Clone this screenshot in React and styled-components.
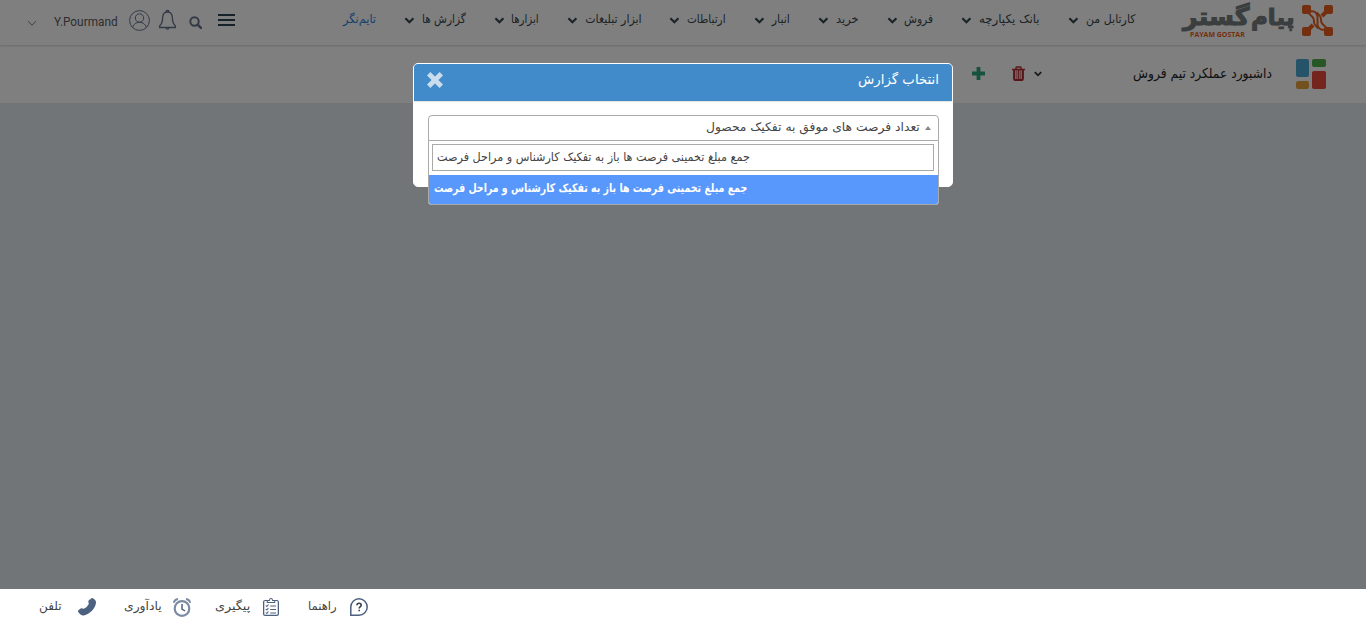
import React, { useLayoutEffect, useRef, useState } from "react";
import styled, { createGlobalStyle } from "styled-components";

const GlobalStyle = createGlobalStyle`
  * { box-sizing: border-box; }
  body {
    margin: 0;
    overflow: hidden;
    font-family: "DejaVu Sans", sans-serif;
    font-size: 12px;
    color: #333;
  }
  svg { display: block; flex: none; }
`;

const FitBox = styled.span`
  display: block;
  flex: none;
  width: ${(p) => p.$width}px;
  height: 20px;
  line-height: 20px;
  direction: ltr;
  white-space: nowrap;
`;

const FitInner = styled.bdi`
  display: inline-block;
  direction: ${(p) => (p.$ltr ? "ltr" : "rtl")};
  transform-origin: 0 50%;
`;

/* Keeps a label at a fixed width whatever Persian face is available. */
function FitText({ width, children, ltr, stretch = 1, ...rest }) {
  const ref = useRef(null);
  const [scale, setScale] = useState(1);
  useLayoutEffect(() => {
    setScale(width / ref.current.offsetWidth);
  }, [width, children]);
  return (
    <FitBox $width={width} {...rest}>
      <FitInner ref={ref} $ltr={ltr} style={{ transform: `scale(${scale}, ${stretch})` }}>
        {children}
      </FitInner>
    </FitBox>
  );
}

const Page = styled.div`
  display: flex;
  flex-direction: column;
  height: 625px;
  direction: rtl;
  background: #e4ebf0;
`;

const Header = styled.header`
  display: flex;
  flex: none;
  height: 45px;
  padding: 0 33px 0 27px;
  background: #fff;
  box-shadow: 0 1px 2px rgba(0, 0, 0, 0.18);
  z-index: 1;
`;

const Logo = styled.div`
  display: flex;
  gap: 7px;
  height: 37px;
  padding-top: 5px;
`;

const LogoWords = styled.div`
  display: flex;
  flex-direction: column;
  width: 112px;
`;

const LogoRow = styled.div`
  display: flex;
  gap: 2px;
  height: 25px;
  color: #747c7e;
`;

const LogoText = styled(FitText)`
  height: 25px;
  line-height: 25px;
  font-size: 23px;
  font-weight: 700;
  -webkit-text-stroke: 1px #747c7e;
`;

const LogoLatin = styled(FitText)`
  height: 8px;
  margin-right: 50px;
  line-height: 8px;
  font-family: "Open Sans", sans-serif;
  font-size: 7.5px;
  font-weight: 700;
  color: #e65f20;
`;

const Nav = styled.nav`
  display: flex;
  align-items: center;
  gap: 28px;
  height: 39px;
  margin-right: 48px;
`;

const NavItem = styled.div`
  display: flex;
  align-items: center;
  gap: 7px;
  color: ${(p) => (p.$active ? "#2f7fd8" : "#37474f")};
  svg { margin-top: 2px; }
`;

const NavLabel = styled(FitText)`
  font-size: 11px;
`;

const Tools = styled.div`
  display: flex;
  align-items: center;
  height: 40px;
  margin-right: auto;
  color: #66738a;
`;

const ToolSlot = styled.div`
  margin-right: ${(p) => p.$gap}px;
  padding-top: ${(p) => p.$drop || 0}px;
`;

const UserName = styled(FitText)`
  height: 23px;
  margin-right: 11px;
  padding-top: 3px;
  font-family: Roboto, sans-serif;
  font-size: 12px;
  color: #5b5b5b;
`;

const TitleBar = styled.div`
  display: flex;
  align-items: center;
  flex: none;
  height: 58px;
  padding: 0 40px 1px 0;
  background: #fff;
`;

const Tile = styled.span`
  height: ${(p) => p.$h}px;
  border-radius: 2px;
  background: ${(p) => p.$color};
`;

const Tiles = styled.div`
  display: flex;
  gap: 3px;
  margin-top: 1px;
`;

const TileColumn = styled.div`
  display: flex;
  flex-direction: column;
  gap: 4px;
  width: ${(p) => p.$w}px;
`;

const PageTitle = styled(FitText)`
  margin-right: 24px;
  font-size: 13px;
  color: #222;
`;

const TitleActions = styled.div`
  display: flex;
  align-items: center;
  margin-right: 91px;
  color: #333;
`;

const Backdrop = styled.div`
  position: fixed;
  inset: 0;
  background: rgba(0, 0, 0, 0.5);
  z-index: 2;
`;

const Dialog = styled.section`
  width: 540px;
  height: 124px;
  margin: 63px auto 0;
  border: 1px solid #fff;
  border-radius: 5px;
  background: #fff;
`;

const DialogHead = styled.div`
  display: flex;
  justify-content: space-between;
  height: 38px;
  padding: 6px 13px 0;
  border-bottom: 1px solid #e5e5e5;
  border-radius: 4px 4px 0 0;
  background: #428bca;
  color: #fff;
`;

const DialogTitle = styled(FitText)`
  font-size: 13px;
`;

const CloseButton = styled.div`
  padding-top: 2px;
  color: #c9dded;
`;

const DialogBody = styled.div`
  padding: 13px 13px 0 14px;
`;

const SelectBox = styled.div`
  position: relative;
  width: 511px;
  height: 26px;
  padding: 1px 7px 0 0;
  border: 1px solid #aaa;
  border-radius: 4px 4px 0 0;
  display: flex;
  gap: 5px;
  color: #444;
  svg { margin-top: 9px; }
`;

const Dropdown = styled.div`
  position: absolute;
  top: 24px;
  left: -1px;
  width: 511px;
  height: 65px;
  padding-top: 3px;
  border: 1px solid #aaa;
  border-radius: 0 0 3px 3px;
  background: #fff;
  overflow: hidden;
`;

const SearchField = styled.div`
  direction: ltr;
  width: 502px;
  height: 27px;
  margin: 0 auto 0 3px;
  padding: 3px 0 0 4px;
  border: 1px solid #aaa;
`;

const Option = styled.div`
  direction: ltr;
  height: 29px;
  margin-top: 4px;
  padding: 4px 0 0 5px;
  background: #5897fb;
  color: #fff;
  font-weight: 700;
`;

const FieldText = styled(FitText)`
  font-size: ${(p) => p.$size || 11}px;
`;

const Footer = styled.footer`
  display: flex;
  direction: ltr;
  align-items: center;
  flex: none;
  height: 36px;
  margin-top: auto;
  padding-left: 39px;
  background: #fff;
  z-index: 3;
`;

const FooterItem = styled.div`
  display: flex;
  align-items: center;
  gap: ${(p) => p.$gap}px;
  margin-right: ${(p) => p.$after}px;
  color: #4c617f;
`;

const FooterLabel = styled(FitText)`
  height: 22px;
  padding-bottom: 2px;
  font-size: 12px;
  color: #444;
`;

function Chevron({ width = 10, height = 7, stroke = 2.2 }) {
  return (
    <svg width={width} height={height} viewBox="0 0 10 7" fill="none">
      <path d="M1 1.2 5 5.2 9 1.2" stroke="currentColor" strokeWidth={stroke} />
    </svg>
  );
}

function LogoMark() {
  return (
    <svg width="31" height="31" viewBox="0 0 31 31" fill="none" stroke="#e65f20">
      <g fill="#e65f20" stroke="none">
        <path d="M2 0h5q2 0 2 2v5q0 2-2 2H2Q0 9 0 7V2Q0 0 2 0Z" />
        <path d="M24 0h5q2 0 2 2v5q0 2-2 2h-5q-2 0-2-2V2q0-2 2-2Z" />
        <path d="M2 22h5q2 0 2 2v5q0 2-2 2H2q-2 0-2-2v-5q0-2 2-2Z" />
        <path d="M24 22h5q2 0 2 2v5q0 2-2 2h-5q-2 0-2-2v-5q0-2 2-2Z" />
      </g>
      <g strokeWidth="2">
        <path d="M7 8.500 10.500 12Q12 13.500 12 16v1q0 2 1.500 3.500l3 3" />
        <path d="M8 6.500q4-1 6 1.500 1.500 1.500 1.500 4v7q0 2.500 1.500 4 2 2.500 6 1.500" />
        <path d="m14.500 7.500 3 3Q19 12 19 14v1q0 2.500 1.500 4L24 22.500" />
        <path d="m24 7-4 4M7 24l4-4" strokeWidth="4" />
      </g>
    </svg>
  );
}

const navItems = [
  ["کارتابل من", 49],
  ["بانک یکپارچه", 61],
  ["فروش", 29],
  ["خرید", 23],
  ["انبار", 18],
  ["ارتباطات", 39],
  ["ابزار تبلیغات", 56],
  ["ابزارها", 28],
  ["گزارش ها", 44],
];

function TopBar() {
  return (
    <Header>
      <Logo>
        <LogoMark />
        <LogoWords>
          <LogoRow>
            <LogoText width={44}>پیام</LogoText>
            <LogoText width={66} stretch={1.06}>گستر</LogoText>
          </LogoRow>
          <LogoLatin width={55} ltr>PAYAM GOSTAR</LogoLatin>
        </LogoWords>
      </Logo>
      <Nav>
        {navItems.map(([label, width]) => (
          <NavItem key={label}>
            <NavLabel width={width} stretch={1.08}>{label}</NavLabel>
            <Chevron width={10.800} />
          </NavItem>
        ))}
        <NavItem $active>
          <NavLabel width={33} stretch={1.08}>تایم‌نگر</NavLabel>
        </NavItem>
      </Nav>
      <Tools>
        <svg width="17" height="13" viewBox="0 0 17 13" stroke="#2f4550" strokeWidth="2">
          <path d="M0 1h17M0 6h17M0 11h17" />
        </svg>
        <ToolSlot $gap={16} $drop={4}>
          <svg width="13" height="13" viewBox="0 0 13 13" fill="none" stroke="currentColor">
            <circle cx="5.500" cy="5.500" r="4.200" strokeWidth="2" />
            <path d="m8.700 8.700 3.500 3.500" strokeWidth="2.400" strokeLinecap="round" />
          </svg>
        </ToolSlot>
        <ToolSlot $gap={13}>
          <svg width="17" height="22" viewBox="0 0 17 22" fill="none" stroke="currentColor" strokeWidth="1.300">
            <path d="M8.500 3C5 3 3.700 6 3.600 9c-.1 4-.8 6-2.900 7.800v1.700h15.600v-1.700C14.200 15 13.500 13 13.400 9 13.300 6 12 3 8.500 3Z" />
            <path d="M7 3a1.500 1.500 0 1 1 3 0M7 19a1.600 1.600 0 0 0 3 0" />
          </svg>
        </ToolSlot>
        <ToolSlot $gap={9}>
          <svg width="21" height="21" viewBox="0 0 21 21" fill="none" stroke="currentColor">
            <circle cx="10.500" cy="10.500" r="9.900" />
            <circle cx="10.500" cy="8" r="4.200" />
            <path d="M3.500 17.300c1.200-3.200 3.500-5 7-5s5.800 1.800 7 5" />
          </svg>
        </ToolSlot>
        <UserName width={64} ltr>Y.Pourmand</UserName>
        <ToolSlot $gap={17} $drop={6}>
          <Chevron stroke={1} />
        </ToolSlot>
      </Tools>
    </Header>
  );
}

function Title() {
  return (
    <TitleBar>
      <Tiles>
        <TileColumn $w={14}>
          <Tile $h={8} $color="#4fae4a" />
          <Tile $h={18} $color="#e64b3c" />
        </TileColumn>
        <TileColumn $w={13}>
          <Tile $h={18} $color="#4ba9d3" />
          <Tile $h={8} $color="#e6a23f" />
        </TileColumn>
      </Tiles>
      <PageTitle width={139} stretch={1.06}>داشبورد عملکرد تیم فروش</PageTitle>
      <TitleActions>
        <Chevron width={8} height={6} />
        <ToolSlot $gap={9}>
          <svg width="13" height="15" viewBox="0 0 13 15" fill="none" stroke="#b32a30">
            <path d="M4 3V1.700Q4 1 5 1h3q1 0 1 .7V3M0 3.500h13" strokeWidth="1.400" />
            <path d="M2.200 4v8.500q0 1.500 1.300 1.500h6q1.300 0 1.300-1.500V4" strokeWidth="2.200" />
            <path d="M4.900 4v9M6.500 4v9M8.100 4v9" strokeWidth=".9" />
          </svg>
        </ToolSlot>
        <ToolSlot $gap={27}>
          <svg width="13" height="13" viewBox="0 0 13 13" fill="#2fa57d">
            <path d="M4.600 0h3.800v4.600H13v3.800H8.400V13H4.600V8.400H0V4.600h4.600Z" />
          </svg>
        </ToolSlot>
      </TitleActions>
    </TitleBar>
  );
}

function ReportDialog() {
  const query = "جمع مبلغ تخمینی فرصت ها باز به تفکیک کارشناس و مراحل فرصت";
  return (
    <Dialog>
      <DialogHead>
        <DialogTitle width={81} stretch={1.06}>انتخاب گزارش</DialogTitle>
        <CloseButton>
          <svg width="16" height="16" viewBox="0 0 16 16" stroke="currentColor" strokeWidth="4.800">
            <path d="m1.700 1.700 12.600 12.600M14.300 1.700 1.700 14.300" />
          </svg>
        </CloseButton>
      </DialogHead>
      <DialogBody>
        <SelectBox>
          <svg width="6" height="4" viewBox="0 0 6 4" fill="#888">
            <path d="m0 4 3-4 3 4Z" />
          </svg>
          <FieldText $size={12} width={214}>تعداد فرصت های موفق به تفکیک محصول</FieldText>
          <Dropdown>
            <SearchField>
              <FieldText width={313} stretch={1.08}>{query}</FieldText>
            </SearchField>
            <Option>
              <FieldText width={313} stretch={1.08}>{query}</FieldText>
            </Option>
          </Dropdown>
        </SelectBox>
      </DialogBody>
    </Dialog>
  );
}

function BottomBar() {
  return (
    <Footer>
      <FooterItem $gap={16} $after={28}>
        <FooterLabel width={23}>تلفن</FooterLabel>
        <svg width="18" height="18" viewBox="0 0 19 19" fill="currentColor">
          <path d="M14 .4 11.500 2.400c-.8.700-.7 1.600-.2 3.200.4 1.800-3.300 5.400-5.500 5.800-1.200-.2-2.100-1-3-.3L.4 13c-.6.500-.5 1.200 0 2 1.600 2.200 3.400 3.800 5.800 3.400C12.500 17.300 19.200 10 19 4.200 18.800 2.300 17.200 1.300 15.600.2 15-.2 14.500 0 14 .4Z" />
        </svg>
      </FooterItem>
      <FooterItem $gap={11} $after={24}>
        <FooterLabel width={38}>یادآوری</FooterLabel>
        <svg width="18" height="19" viewBox="0 0 18 19" fill="none" stroke="#7a8aa3">
          <circle cx="9" cy="10.500" r="7.300" strokeWidth="2.200" />
          <path d="M.8 4.800Q1.500 1.500 5 1M17.200 4.800Q16.500 1.500 13 1" strokeWidth="1.800" />
          <path d="M9 6v5l3 2" stroke="#4c617f" strokeWidth="1.500" />
        </svg>
      </FooterItem>
      <FooterItem $gap={13} $after={29}>
        <FooterLabel width={35}>پیگیری</FooterLabel>
        <svg width="16" height="18" viewBox="0 0 15 18" preserveAspectRatio="none" fill="none" stroke="currentColor">
          <path d="M4 2.500H2Q.6 2.500.6 4v12q0 1.400 1.400 1.400h11q1.400 0 1.400-1.400V4q0-1.500-1.400-1.500h-2" strokeWidth="1.200" />
          <path d="M4 4.500v-2h2Q6.200.6 7.500.6T9 2.500h2v2Z" />
          <path d="m2.600 7.500 1 1 1.500-2M2.600 11l1 1 1.500-2M2.600 14.500l1 1 1.500-2M6.700 8h5.500M6.700 11.500h5.500M6.700 15h5.500" />
        </svg>
      </FooterItem>
      <FooterItem $gap={13} $after={0}>
        <FooterLabel width={29}>راهنما</FooterLabel>
        <svg width="18" height="18" viewBox="0 0 18 18" fill="none" stroke="currentColor">
          <path d="M.8 17.200V9A8.200 8.200 0 1 1 9 17.200Z" strokeWidth="1.500" />
          <path d="M6.900 7.300Q7 5.200 9.100 5.200t2.100 1.900q0 1.100-1.100 1.800-.9.600-.9 1.500M9.200 11.700v1.600" stroke="#333f50" strokeWidth="1.600" />
        </svg>
      </FooterItem>
    </Footer>
  );
}

export default function App() {
  return (
    <>
      <GlobalStyle />
      <Page>
        <TopBar />
        <Title />
        <Backdrop>
          <ReportDialog />
        </Backdrop>
        <BottomBar />
      </Page>
    </>
  );
}
